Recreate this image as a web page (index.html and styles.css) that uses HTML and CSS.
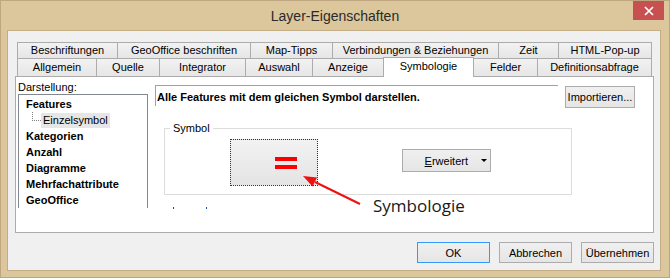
FILE: index.html
```html
<!DOCTYPE html>
<html lang="de">
<head>
<meta charset="utf-8">
<title>Layer-Eigenschaften</title>
<link rel="stylesheet" href="styles.css">
</head>
<body>
<div class="window">
  <div class="titlebar">
    <span></span>
    <div class="title">Layer-Eigenschaften</div>
    <button class="close" aria-label="Schließen">
      <svg width="10" height="10" viewBox="0 0 10 10"><path d="M1 1L9 9M9 1L1 9" stroke="#fff" stroke-width="1.7" fill="none"/></svg>
    </button>
  </div>
  <div class="client">
    <div class="tabs">
      <div class="tabrow row1">
        <div class="tab w100">Beschriftungen</div>
        <div class="tab w133">GeoOffice beschriften</div>
        <div class="tab w82">Map-Tipps</div>
        <div class="tab w166">Verbindungen &amp; Beziehungen</div>
        <div class="tab w60">Zeit</div>
        <div class="tab w94 last">HTML-Pop-up</div>
      </div>
      <div class="tabrow row2">
        <div class="tab w79">Allgemein</div>
        <div class="tab w63">Quelle</div>
        <div class="tab w86">Integrator</div>
        <div class="tab w67">Auswahl</div>
        <div class="tab w71">Anzeige</div>
        <div class="tab w91 selected">Symbologie</div>
        <div class="tab w63">Felder</div>
        <div class="tab w115 last">Definitionsabfrage</div>
      </div>
    </div>
    <div class="panel">
      <div class="left">
        <div class="label">Darstellung:</div>
        <div class="tree">
          <div class="node">Features</div>
          <div class="node child"><span class="conn"></span><span class="sel">Einzelsymbol</span></div>
          <div class="node">Kategorien</div>
          <div class="node">Anzahl</div>
          <div class="node">Diagramme</div>
          <div class="node">Mehrfachattribute</div>
          <div class="node">GeoOffice</div>
        </div>
      </div>
      <div class="right">
        <div class="toprow">
          <div class="desc">Alle Features mit dem gleichen Symbol darstellen.</div>
          <button class="btn import">Importieren...</button>
        </div>
        <div class="group">
          <div class="group-title">Symbol</div>
          <div class="group-body">
            <button class="symbtn"><span class="bar"></span><span class="bar"></span></button>
            <button class="btn erw"><span class="erw-text"><u>E</u>rweitert</span><span class="caret"></span></button>
          </div>
        </div>
      </div>
      <svg class="annot" width="637" height="155" viewBox="0 0 637 155">
        <line x1="344" y1="127" x2="299" y2="105" stroke="#f01010" stroke-width="2"/>
        <polygon points="287,99 301,100.5 296.5,109.5" fill="#f01010"/>
        <rect x="157" y="130" width="1" height="2" fill="#2244aa"/>
        <rect x="190" y="130" width="1" height="2" fill="#2244aa"/>
        <text x="357" y="135" class="annot-text">Symbologie</text>
      </svg>
    </div>
    <div class="footer">
      <button class="btn ok">OK</button>
      <button class="btn">Abbrechen</button>
      <button class="btn">Übernehmen</button>
    </div>
  </div>
</div>
</body>
</html>
```
FILE: styles.css
```css
* { box-sizing: border-box; }
html, body { margin: 0; padding: 0; }
body {
  width: 670px;
  height: 278px;
  overflow: hidden;
  font-family: "Liberation Sans", Arial, sans-serif;
  font-size: 11px;
  color: #000;
}
.window {
  width: 670px;
  height: 278px;
  background: #dcc69c;
  border: 1px solid #bea780;
  display: flex;
  flex-direction: column;
}
.titlebar {
  height: 29px;
  display: grid;
  grid-template-columns: 1fr auto 1fr;
  align-items: start;
}
.title {
  font-family: "Liberation Sans", Arial, sans-serif;
  font-size: 14px;
  color: #2a2a2a;
  line-height: 16px;
  margin-top: 7px;
}
.close {
  justify-self: end;
  width: 31px;
  height: 19px;
  margin: 0 5px 0 0;
  padding: 0;
  border: none;
  background: #c75050;
  display: flex;
  align-items: center;
  justify-content: center;
}
.client {
  flex: 1;
  margin: 0 8px 6px 6px;
  border: 1px solid #c2ad87;
  background: #f0f0f0;
  padding: 11px 6px 0 7px;
  display: flex;
  flex-direction: column;
}
.tabs { margin-left: 2px; }
.tabrow { display: flex; }
.row1 { height: 16px; }
.row2 { height: 18px; align-items: flex-start; }
.tab {
  flex: none;
  border: 1px solid #acacac;
  border-bottom: none;
  border-right: none;
  background: linear-gradient(#f2f2f2, #e6e6e6);
  text-align: center;
  white-space: nowrap;
}
.row1 .tab { height: 16px; line-height: 15px; }
.row2 .tab { height: 18px; line-height: 17px; }
.tab.last { border-right: 1px solid #acacac; }
.row2 .tab.selected {
  position: relative;
  z-index: 1;
  height: 20px;
  margin-top: -1px;
  background: #fff;
  border-right: 1px solid #acacac;
  line-height: 17px;
}
.row2 .tab.selected + .tab { border-left: none; }
.w60 { width: 60px; } .w63 { width: 63px; } .w67 { width: 67px; }
.w71 { width: 71px; } .w79 { width: 79px; } .w82 { width: 82px; }
.w86 { width: 86px; } .w91 { width: 91px; } .w94 { width: 94px; }
.w100 { width: 100px; } .w115 { width: 115px; } .w133 { width: 133px; }
.w166 { width: 166px; }
.panel {
  position: relative;
  width: 639px;
  height: 157px;
  background: #fff;
  border: 1px solid #acacac;
  padding-left: 2px;
  display: flex;
}
.left { width: 130px; flex: none; }
.label { margin-top: 3px; line-height: 14px; }
.tree {
  height: 114px;
  border: 1px solid #828790;
  border-bottom: none;
  padding-top: 1px;
}
.node {
  height: 16px;
  line-height: 16px;
  font-weight: bold;
  padding-left: 7px;
  white-space: nowrap;
}
.node.child {
  font-weight: normal;
  padding-left: 13px;
  display: flex;
  align-items: flex-start;
}
.conn {
  width: 9px;
  height: 9px;
  border-left: 1px dotted #808080;
  border-bottom: 1px dotted #808080;
}
.sel {
  background: #e6e6e6;
  padding: 0 2px;
  margin-top: 1px;
  line-height: 15px;
  height: 15px;
}
.right { margin-left: 7px; flex: none; width: 497px; }
.toprow { display: flex; margin-top: 8px; align-items: flex-start; }
.desc {
  width: 403px;
  height: 21px;
  border-top: 1px solid #a0a0a0;
  border-left: 1px solid #a0a0a0;
  font-weight: bold;
  line-height: 22px;
  padding-left: 1px;
}
.btn {
  font-family: "Liberation Sans", Arial, sans-serif;
  font-size: 11px;
  color: #000;
  background: linear-gradient(#f0f0f0, #e5e5e5);
  border: 1px solid #acacac;
  border-radius: 0;
  padding: 0;
  margin: 0;
}
.import { width: 70px; height: 22px; margin-left: 7px; margin-top: 1px; }
.group {
  margin: 20px 0 0 9px;
  width: 408px;
  height: 67px;
  border: 1px solid #dcdcdc;
}
.group-title {
  display: table;
  margin: -7px 0 0 5px;
  padding: 0 3px;
  background: #fff;
  line-height: 13px;
}
.group-body { display: flex; align-items: flex-start; padding-left: 65px; margin-top: 4px; }
.symbtn {
  width: 88px;
  height: 47px;
  margin: 0;
  padding: 17px 0 0 44px;
  border: 1px dotted #333;
  background: linear-gradient(#f2f2f2, #e4e4e4);
  display: flex;
  flex-direction: column;
  gap: 4px;
}
.bar { display: block; width: 22px; height: 4px; background: #ff0000; }
.erw {
  width: 89px;
  height: 23px;
  margin-left: 84px;
  margin-top: 10px;
  display: flex;
  align-items: center;
  justify-content: flex-end;
  padding-right: 3px;
}
.erw-text { margin-right: 13px; }
.erw u { text-decoration: underline; }
.caret {
  width: 0; height: 0;
  border-left: 3px solid transparent;
  border-right: 3px solid transparent;
  border-top: 3px solid #000;
}
.annot { position: absolute; left: 0; top: 0; overflow: visible; }
.annot-text { font-family: "Open Sans", sans-serif; font-size: 17px; fill: #1a1a1a; }
.footer {
  display: flex;
  justify-content: flex-end;
  gap: 9px;
  margin-top: 9px;
}
.footer .btn { width: 73px; height: 21px; }
.footer .ok { border-color: #3399ff; }
```
